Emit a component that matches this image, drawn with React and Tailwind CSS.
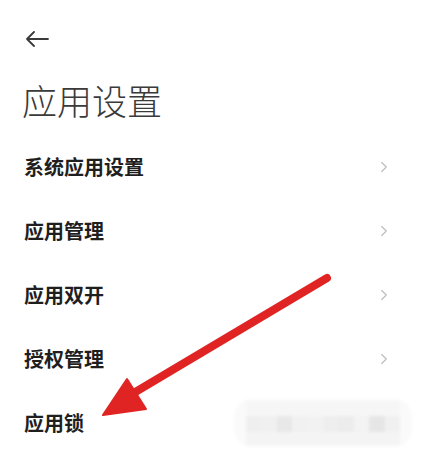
import { ChevronRight } from 'lucide-react'

const ROWS = ['系统应用设置', '应用管理', '应用双开', '授权管理']

const FONT = { fontFamily: '"Noto Sans CJK SC", "Noto Sans", sans-serif' }

// pixelated placeholder tones, left to right
const MID = ['#efefef', '#f0f0f0', '#e8e8e8', '#f1f1f1', '#f2f2f2', '#eeeeee', '#ececec', '#f3f3f3', '#e6e6e6', '#f0f0f0']

function Row({ label }) {
  return (
    <div className="flex h-[64px] items-center justify-between pl-[24px] pr-[29px]">
      <span className="text-[20px] font-bold leading-none text-[#1f1f1f]">{label}</span>
      <ChevronRight className="h-[18px] w-[18px] text-[#bdbdbd]" strokeWidth={1.6} />
    </div>
  )
}

export default function App() {
  return (
    <div className="relative h-[463px] w-[422px] overflow-hidden bg-white" style={FONT}>
      <div className="box-content flex h-[22px] items-center pl-[25px] pt-[28px]">
        <svg width="24" height="16" viewBox="0 0 24 16" fill="none" stroke="#3a3a3a" strokeWidth="1.8" strokeLinecap="round" strokeLinejoin="round">
          <path d="M23 8H2M9 1L2 8l7 7" />
        </svg>
      </div>
      <div className="mt-[30px] h-[40px] pl-[22px] text-[35px] font-light leading-[40px] text-[#3a3a3a]">
        应用设置
      </div>
      <div className="mt-[15px] flex flex-col">
        {ROWS.map((r) => (
          <Row key={r} label={r} />
        ))}
        <div className="flex h-[64px] items-center justify-between pl-[24px] pr-[10px]">
          <span className="text-[20px] font-bold leading-none text-[#1f1f1f]">应用锁</span>
          <div className="flex h-[48px] w-[178px] flex-col justify-center rounded-[18px] bg-[#fafafa] px-[12px] blur-[1.5px]">
            <div className="flex h-[15px]">
              {MID.map((c, i) => (
                <div key={i} className="h-full flex-1 bg-[#f6f6f6]" />
              ))}
            </div>
            <div className="flex h-[16px]">
              {MID.map((c, i) => (
                <div key={i} className="h-full flex-1" style={{ background: c }} />
              ))}
            </div>
            <div className="flex h-[13px]">
              {MID.map((c, i) => (
                <div key={i} className="h-full flex-1 bg-[#f4f4f4]" />
              ))}
            </div>
          </div>
        </div>
      </div>
      <svg className="pointer-events-none absolute left-0 top-0" width="422" height="463" viewBox="0 0 422 463">
        <line x1="327" y1="278" x2="132" y2="394" stroke="#e02424" strokeWidth="8" strokeLinecap="round" />
        <polygon points="103,415 127,379 146,409" fill="#e02424" stroke="#e02424" strokeWidth="2" strokeLinejoin="round" />
      </svg>
    </div>
  )
}
